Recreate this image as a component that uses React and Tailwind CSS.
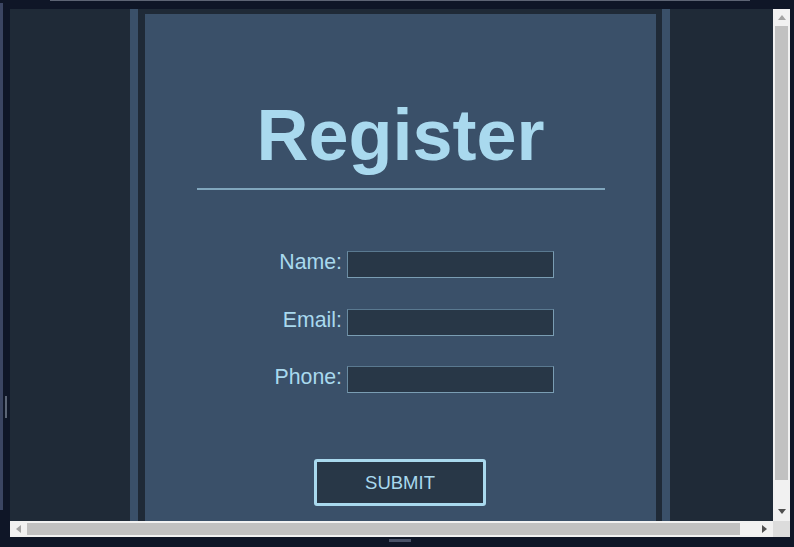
export default function App() {
  const fields = ["Name:", "Email:", "Phone:"];

  return (
    <div className="relative flex h-[547px] w-[794px] flex-col overflow-hidden bg-[#0f1627] font-['Liberation_Sans',Arial,sans-serif]">
      {/* window chrome bits */}
      <div className="absolute left-0 top-[3px] h-[507px] w-[3px] bg-[#3b4562]" />
      <div className="absolute left-[5px] top-[396px] h-[22px] w-[2px] bg-[#5b6475]" />
      <div className="absolute left-[389px] top-[539px] h-[3px] w-[22px] bg-[#4a5268]" />

      <div className="h-[9px]">
        <div className="ml-[50px] h-px w-[700px] bg-[#5d6474]" />
      </div>

      <div className="ml-[10px] grid h-[528px] w-[780px] grid-cols-[763px_17px] grid-rows-[512px_16px]">
        {/* page content */}
        <div className="overflow-hidden bg-[#1f2a37] pl-[120px]">
          <div className="h-full w-[540px] border-x-8 border-[#3a5069] pl-[7px] pr-[6px] pt-[5px]">
            <div className="h-[560px] w-[511px] bg-[#3a5069] pt-[85px]">
              <h1 className="text-center text-[72px] font-bold leading-[72px] text-[#a9d9ee]">
                Register
              </h1>
              <div className="mx-auto mt-[17px] h-[2px] w-[408px] bg-[#80a6bd]" />

              <div className="mt-[61px] grid grid-cols-[68px_207px] gap-x-[5px] gap-y-[30.5px] pl-[129px]">
                {fields.map((f) => (
                  <div key={f} className="contents">
                    <label className="h-[27px] pb-[4px] pt-0 text-right text-[21.3px] leading-[23px] text-[#a9d9ee]">
                      {f}
                    </label>
                    <input
                      type="text"
                      className="h-[27px] w-[207px] border border-[#7a9db3] border-l-[#6a8ba1] border-t-[#5a7990] bg-[#283747] outline-none"
                    />
                  </div>
                ))}
              </div>

              <div className="mt-[66px] flex justify-center">
                <button className="ml-[-1px] h-[47px] w-[172px] rounded-[3px] border-[3px] border-[#a9d9ee] bg-[#283747] text-[18.5px] text-[#a9d9ee]">
                  SUBMIT
                </button>
              </div>
            </div>
          </div>
        </div>

        {/* vertical scrollbar */}
        <div className="flex flex-col bg-[#f1f1f1]">
          <div className="flex h-[17px] items-center justify-center">
            <svg width="8" height="5" viewBox="0 0 8 5">
              <path d="M0 5 L4 0 L8 5 Z" fill="#a3a3a3" />
            </svg>
          </div>
          <div className="mx-[2px] h-[454px] bg-[#c1c1c1]" />
          <div className="flex-1" />
          <div className="flex h-[17px] items-center justify-center pb-[2px]">
            <svg width="8" height="5" viewBox="0 0 8 5">
              <path d="M0 0 L8 0 L4 5 Z" fill="#505050" />
            </svg>
          </div>
        </div>

        {/* horizontal scrollbar */}
        <div className="flex bg-[#f1f1f1]">
          <div className="flex w-[17px] items-center justify-center">
            <svg width="5" height="8" viewBox="0 0 5 8">
              <path d="M5 0 L0 4 L5 8 Z" fill="#a3a3a3" />
            </svg>
          </div>
          <div className="my-[2px] w-[713px] bg-[#c1c1c1]" />
          <div className="flex-1" />
          <div className="flex w-[17px] items-center justify-center">
            <svg width="5" height="8" viewBox="0 0 5 8">
              <path d="M0 0 L5 4 L0 8 Z" fill="#505050" />
            </svg>
          </div>
        </div>
        <div className="bg-[#dcdcdc]" />
      </div>
    </div>
  );
}
